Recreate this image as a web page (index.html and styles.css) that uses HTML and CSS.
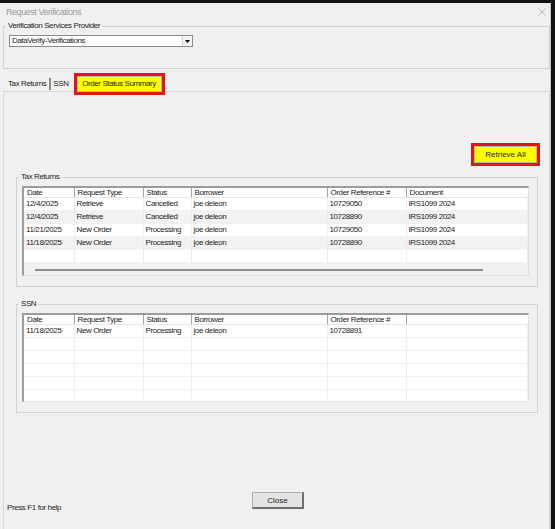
FILE: index.html
```html
<!DOCTYPE html>
<html lang="en">
<head>
    <meta charset="UTF-8">
    <title>Request Verifications</title>
    <link rel="stylesheet" href="styles.css">
</head>
<body>

<div class="window">
    <!-- Title bar -->
    <div class="titlebar">
        <span class="title">Request Verifications</span>
        <svg class="close-x" width="8" height="8" viewBox="0 0 8 8">
            <path d="M0.5 0.5 L7.5 7.5 M7.5 0.5 L0.5 7.5" stroke="#b4b4b4" stroke-width="0.9" fill="none"/>
        </svg>
    </div>

    <!-- Provider selection -->
    <fieldset class="provider">
        <legend>Verification Services Provider</legend>
        <div class="combo">
            <span class="combo-text">DataVerify-Verifications</span>
            <span class="combo-btn">
                <svg width="5" height="3" viewBox="0 0 5 3"><path d="M0 0 H5 L2.5 3 Z" fill="#000"/></svg>
            </span>
        </div>
    </fieldset>

    <!-- Tabs -->
    <div class="tabs">
        <span class="tab first">Tax Returns</span>
        <span class="tab">SSN</span>
        <span class="tab selected"><span class="tab-inner">Order Status Summary</span></span>
    </div>

    <div class="page">
        <div class="toolbar">
            <button class="btn-hl"><span class="btn-hl-inner">Retrieve All</span></button>
        </div>

        <fieldset class="group">
            <legend>Tax Returns</legend>
            <div class="listview tax">
                <table>
                    <colgroup>
                        <col class="c-date"><col class="c-type"><col class="c-status"><col class="c-borrower"><col class="c-ref"><col>
                    </colgroup>
                    <thead>
                        <tr><th>Date</th><th>Request Type</th><th>Status</th><th>Borrower</th><th>Order Reference #</th><th>Document</th></tr>
                    </thead>
                    <tbody>
                        <tr><td>12/4/2025</td><td>Retrieve</td><td>Cancelled</td><td>joe deleon</td><td>10729050</td><td>IRS1099 2024</td></tr>
                        <tr><td>12/4/2025</td><td>Retrieve</td><td>Cancelled</td><td>joe deleon</td><td>10728890</td><td>IRS1099 2024</td></tr>
                        <tr><td>11/21/2025</td><td>New Order</td><td>Processing</td><td>joe deleon</td><td>10729050</td><td>IRS1099 2024</td></tr>
                        <tr><td>11/18/2025</td><td>New Order</td><td>Processing</td><td>joe deleon</td><td>10728890</td><td>IRS1099 2024</td></tr>
                        <tr><td></td><td></td><td></td><td></td><td></td><td></td></tr>
                    </tbody>
                </table>
                <div class="hscroll"><div class="thumb"></div></div>
            </div>
        </fieldset>

        <fieldset class="group ssn-group">
            <legend>SSN</legend>
            <div class="listview ssn">
                <table>
                    <colgroup>
                        <col class="c-date"><col class="c-type"><col class="c-status"><col class="c-borrower"><col class="c-ref"><col>
                    </colgroup>
                    <thead>
                        <tr><th>Date</th><th>Request Type</th><th>Status</th><th>Borrower</th><th>Order Reference #</th><th></th></tr>
                    </thead>
                    <tbody>
                        <tr><td>11/18/2025</td><td>New Order</td><td>Processing</td><td>joe deleon</td><td>10728891</td><td></td></tr>
                        <tr><td></td><td></td><td></td><td></td><td></td><td></td></tr>
                        <tr><td></td><td></td><td></td><td></td><td></td><td></td></tr>
                        <tr><td></td><td></td><td></td><td></td><td></td><td></td></tr>
                        <tr><td></td><td></td><td></td><td></td><td></td><td></td></tr>
                        <tr><td></td><td></td><td></td><td></td><td></td><td></td></tr>
                    </tbody>
                </table>
            </div>
        </fieldset>

        <div class="footer">
            <span class="help">Press F1 for help</span>
            <button class="close-btn">Close</button>
            <span></span>
        </div>
    </div>
</div>

</body>
</html>
```

FILE: styles.css
```css
/* Basic reset */
body {
    margin: 0;
    background-color: #111111;
    font-family: "Liberation Sans", Arial, sans-serif;
    font-size: 8px;
    letter-spacing: -0.4px;
    color: #1c1c1c;
    height: 529px;
    overflow: hidden;
}

/* Dialog window */
.window {
    margin-top: 3px;
    width: 550px;
    height: 526px;
    background-color: #f0f0f0;
    border-right: 1px solid #c4c4c4;
    overflow: hidden;
}

.titlebar {
    height: 18px;
    display: flex;
    align-items: center;
    justify-content: space-between;
    padding: 0 4px 0 6px;
}

.title {
    font-size: 9px;
    letter-spacing: -0.45px;
    color: #9c9c9c;
}

/* Group boxes */
fieldset {
    margin: 0;
    border: 1px solid #d2d2d2;
    padding: 0 0 0 5px;
    min-width: 0;
}

legend {
    font-size: 8px;
    line-height: 10px;
    padding: 0 2px;
    margin-left: -3px;
}

.provider {
    margin-left: 3px;
    width: 547px;
    box-sizing: border-box;
    padding-bottom: 21px;
}

.combo {
    margin-top: 4px;
    width: 184px;
    height: 12px;
    box-sizing: border-box;
    background-color: #ffffff;
    border: 1px solid #8a8a8a;
    display: flex;
    align-items: center;
    justify-content: space-between;
}

.combo-text {
    padding-left: 2px;
    line-height: 10px;
}

.combo-btn {
    width: 10px;
    height: 10px;
    box-sizing: border-box;
    border-left: 1px solid #d0d0d0;
    background-color: #f4f4f4;
    display: flex;
    align-items: center;
    justify-content: center;
}

/* Tabs */
.tabs {
    height: 22px;
    display: flex;
    align-items: flex-end;
    padding-left: 7px;
}

.tab {
    height: 14px;
    line-height: 14px;
    padding: 0 2px;
    white-space: nowrap;
}

.tab.first {
    border-right: 2px solid #8a8a8a;
    height: 12px;
    line-height: 12px;
    margin-bottom: 1px;
    padding: 0 3px 0 1px;
}

.tab.selected {
    position: relative;
    z-index: 1;
    height: 22px;
    width: 91px;
    box-sizing: border-box;
    margin-left: 3px;
    margin-bottom: -4px;
    border: 3px solid #e5141c;
    padding: 0;
}

.tab-inner {
    display: block;
    height: 100%;
    box-sizing: border-box;
    background-color: #ffff00;
    border: 1px solid #b8b8a0;
    text-align: center;
    line-height: 14px;
}

/* Tab page */
.page {
    margin-left: 3px;
    width: 547px;
    height: 460px;
    box-sizing: border-box;
    border: 1px solid #d8d8d8;
}

.toolbar {
    display: flex;
    justify-content: flex-end;
    padding: 51px 9px 0 0;
}

.btn-hl {
    width: 69px;
    height: 23px;
    padding: 0;
    margin: 0;
    border: 3px solid #e5141c;
    background: none;
    font: inherit;
}

.btn-hl-inner {
    display: block;
    height: 100%;
    box-sizing: border-box;
    background-color: #ffff00;
    border: 1px solid #b8b8a0;
    line-height: 15px;
    color: #1c1c1c;
}

.group {
    margin: 6px 0 0 12px;
    width: 522px;
    box-sizing: border-box;
    padding-bottom: 10px;
}

.ssn-group {
    margin-top: 12px;
}

/* List views */
.listview {
    margin-top: 4px;
    width: 507px;
    box-sizing: border-box;
    background-color: #ffffff;
    border-left: 2px solid #9c9c9c;
    border-top: 2px solid #9c9c9c;
    border-right: 1px solid #e2e2e2;
    border-bottom: 1px solid #e2e2e2;
    overflow: hidden;
}

.listview.tax {
    height: 90px;
}

.listview.ssn {
    height: 89px;
}

table {
    width: 100%;
    border-collapse: collapse;
    table-layout: fixed;
}

.c-date { width: 50px; }
.c-type { width: 69px; }
.c-status { width: 48px; }
.c-borrower { width: 136px; }
.c-ref { width: 79px; }

th, td {
    padding: 0 0 0 3px;
    text-align: left;
    font-weight: normal;
    white-space: nowrap;
    overflow: hidden;
}

th {
    height: 9px;
    line-height: 9px;
    border-right: 1px solid #a2a2a2;
    border-bottom: 1px solid #e6e6e6;
}

th:last-child {
    border-right: none;
}

td {
    height: 12px;
    line-height: 12px;
    padding-left: 2px;
    border-right: 1px solid #ededed;
    border-bottom: 1px solid #f0f0f0;
}

.tax tbody tr:nth-child(even) td {
    background-color: #f2f2f2;
}

.hscroll {
    height: 14px;
    background-color: #f0f0f0;
    display: flex;
    align-items: center;
    padding-left: 11px;
}

.thumb {
    width: 448px;
    height: 2px;
    background-color: #8e8e8e;
}

/* Footer */
.footer {
    margin-top: 79px;
    display: grid;
    grid-template-columns: 1fr auto 1fr;
    align-items: start;
    padding-left: 3px;
}

.help {
    padding-top: 11px;
    line-height: 10px;
}

.close-btn {
    width: 52px;
    height: 17px;
    padding: 0;
    margin: 0;
    font: inherit;
    color: #1c1c1c;
    background-color: #e3e3e3;
    border: 1px solid #adadad;
    border-right: 2px solid #6e6e6e;
    border-bottom: 2px solid #6e6e6e;
}
```
